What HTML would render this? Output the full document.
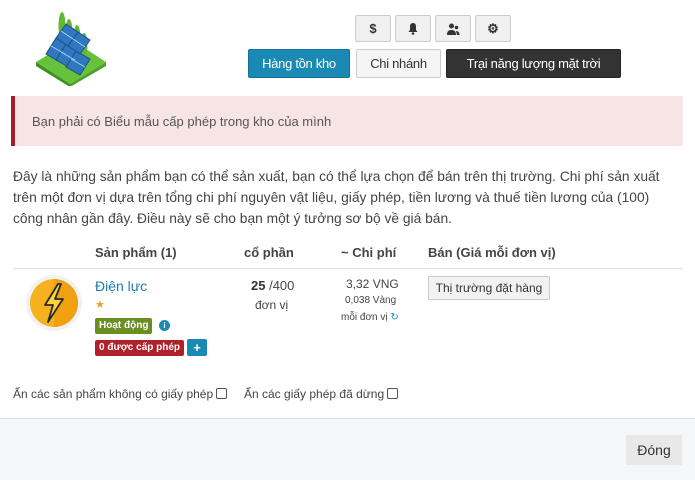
<!DOCTYPE html>
<html><head><meta charset="utf-8"><style>
*{box-sizing:border-box;margin:0;padding:0}
body{width:695px;height:480px;background:#fff;font-family:"Liberation Sans",sans-serif;color:#444;position:relative;overflow:hidden;font-size:13px}
.a{position:absolute;white-space:nowrap}
.ib{position:absolute;top:15px;width:36px;height:27px;background:#f0f0f0;border:1px solid #ccc;border-radius:2px;display:flex;align-items:center;justify-content:center;font-size:13px;color:#333;font-weight:bold}
.btn{position:absolute;top:49px;height:29px;line-height:27px;border-radius:2px;font-size:13px;text-align:center;letter-spacing:-.3px}
</style></head><body>
<svg class="a" style="left:34px;top:10px" width="76" height="76" viewBox="0 0 76 76">
<polygon points="2,52 38,30 72,52 36,74" fill="#66c23a"/>
<polygon points="2,52 36,74 36,77 2,56" fill="#3f8f1f"/>
<polygon points="36,74 72,52 72,56 36,77" fill="#4fa12a"/>
<ellipse cx="28" cy="16" rx="3.5" ry="14" fill="#63b833"/><ellipse cx="35" cy="22" rx="3.5" ry="13" fill="#63b833"/><ellipse cx="43" cy="28" rx="3.5" ry="13" fill="#63b833"/><ellipse cx="50" cy="35" rx="3.5" ry="12" fill="#63b833"/>
<g fill="#2f78c0" stroke="#1d4f86" stroke-width="1">
<polygon points="12,44 22,28 36,36 26,52"/><polygon points="22,50 32,34 46,42 36,58"/><polygon points="32,57 42,41 56,49 46,65"/>
<polygon points="22,28 32,14 44,22 34,36" /><polygon points="34,36 44,22 56,30 46,44"/>
</g>
<g stroke="#9fd4f5" stroke-width="1"><line x1="17" y1="36" x2="31" y2="44"/><line x1="27" y1="42" x2="41" y2="50"/><line x1="37" y1="49" x2="51" y2="57"/><line x1="27" y1="21" x2="39" y2="29"/><line x1="39" y1="29" x2="51" y2="37"/></g>
</svg>
<div class="ib" style="left:355px">$</div>
<div class="ib" style="left:395px"><svg width="12" height="13" viewBox="0 0 12 13"><path d="M6 1C3.5 1 3 3 3 5v3L1.5 10h9L9 8V5C9 3 8.5 1 6 1z" fill="#333"/><circle cx="6" cy="11.5" r="1.3" fill="#333"/></svg></div>
<div class="ib" style="left:435px"><svg width="13" height="12" viewBox="0 0 13 12"><circle cx="4.5" cy="3" r="2.5" fill="#333"/><path d="M0 12c0-4 2-5 4.5-5S9 8 9 12z" fill="#333"/><circle cx="9.5" cy="4.5" r="1.8" fill="#333"/><path d="M9 8c2 0 3.5 1 3.5 4H10z" fill="#333"/></svg></div>
<div class="ib" style="left:475px">&#9881;</div>
<div class="btn" style="left:248px;width:102px;background:#1a8ab5;border:1px solid #137199;color:#fff">Hàng tồn kho</div>
<div class="btn" style="left:356px;width:85px;background:#f5f5f5;border:1px solid #ccc;color:#333">Chi nhánh</div>
<div class="btn" style="left:446px;width:175px;background:#333;border:1px solid #222;color:#fff">Trại năng lượng mặt trời</div>
<div class="a" style="left:11px;top:96px;width:672px;height:50px;background:#f7e4e5;border-left:4px solid #a61c2a"></div>
<div class="a" style="left:32px;top:114px;font-size:13px;color:#555">Bạn phải có Biểu mẫu cấp phép trong kho của mình</div>
<div class="a" style="left:13px;top:166px;line-height:21px;font-size:13.8px;color:#444">Đây là những sản phẩm bạn có thể sản xuất, bạn có thể lựa chọn để bán trên thị trường. Chi phí sản xuất<br>trên một đơn vị dựa trên tổng chi phí nguyên vật liệu, giấy phép, tiền lương và thuế tiền lương của (100)<br>công nhân gần đây. Điều này sẽ cho bạn một ý tưởng sơ bộ về giá bán.</div>
<div class="a" style="left:95px;top:245px;font-weight:bold;color:#444">Sản phẩm (1)</div>
<div class="a" style="left:244px;top:245px;font-weight:bold;color:#444">cổ phần</div>
<div class="a" style="left:341px;top:245px;font-weight:bold;color:#444">~ Chi phí</div>
<div class="a" style="left:428px;top:245px;font-weight:bold;color:#444">Bán (Giá mỗi đơn vị)</div>
<div class="a" style="left:13px;top:268px;width:670px;height:1px;background:#ddd"></div>
<svg class="a" style="left:25px;top:274px" width="58" height="58" viewBox="0 0 58 58">
<circle cx="29" cy="29" r="28" fill="#f2f2f2"/>
<circle cx="29" cy="29" r="24" fill="#f5b21e"/>
<path d="M29 5a24 24 0 0 1 0 48z" fill="#f0a010"/>
<path d="M33 10L20 31h8l-5 17 15-23h-8l6-15z" fill="#f9d43a" stroke="#2a2a2a" stroke-width="1.8" stroke-linejoin="round"/>
</svg>
<div class="a" style="left:95px;top:278px;color:#1a7fa8;font-size:14px">Điện lực</div>
<div class="a" style="left:95px;top:298px;color:#f0a030;font-size:11px">&#9733;</div>
<div class="a" style="left:95px;top:318px;height:16px;padding:0 4px;background:#6b8e23;color:#fff;font-size:10px;font-weight:bold;line-height:16px;border-radius:2px">Hoạt động</div>
<div class="a" style="left:159px;top:320px;width:11px;height:11px;border-radius:50%;background:#1a8ab5;color:#fff;font-size:8px;font-weight:bold;text-align:center;line-height:11px">i</div>
<div class="a" style="left:95px;top:340px;height:16px;padding:0 4px;background:#b0202b;color:#fff;font-size:10px;font-weight:bold;line-height:16px;border-radius:2px">0 được cấp phép</div>
<div class="a" style="left:187px;top:339px;width:20px;height:17px;background:#1a8ab5;color:#fff;font-weight:bold;text-align:center;line-height:17px;border-radius:2px">+</div>
<div class="a" style="left:251px;top:278px;font-size:13px"><b style="color:#333">25</b> /400</div>
<div class="a" style="left:255px;top:298px;font-size:12px">đơn vị</div>
<div class="a" style="left:346px;top:277px;font-size:12px">3,32 VNG</div>
<div class="a" style="left:345px;top:295px;font-size:10px">0,038 Vàng</div>
<div class="a" style="left:341px;top:312px;font-size:10px">mỗi đơn vị <span style="color:#1a8ab5">&#8635;</span></div>
<div class="a" style="left:428px;top:276px;width:122px;height:24px;background:#f2f2f2;border:1px solid #ccc;border-radius:2px;text-align:center;line-height:22px;font-size:12px;color:#333">Thị trường đặt hàng</div>
<div class="a" style="left:13px;top:387px;font-size:12px;color:#444">Ẩn các sản phẩm không có giấy phép <span style="display:inline-block;width:11px;height:11px;border:1px solid #555;border-radius:2px;vertical-align:-1px"></span></div>
<div class="a" style="left:244px;top:387px;font-size:12px;color:#444">Ẩn các giấy phép đã dừng <span style="display:inline-block;width:11px;height:11px;border:1px solid #555;border-radius:2px;vertical-align:-1px"></span></div>
<div class="a" style="left:0;top:418px;width:695px;height:62px;background:#f5f6f7;border-top:1px solid #ddd"></div>
<div class="a" style="left:626px;top:435px;width:56px;height:30px;background:#e8e8e8;text-align:center;line-height:30px;font-size:14px;color:#333">Đóng</div>
</body></html>
